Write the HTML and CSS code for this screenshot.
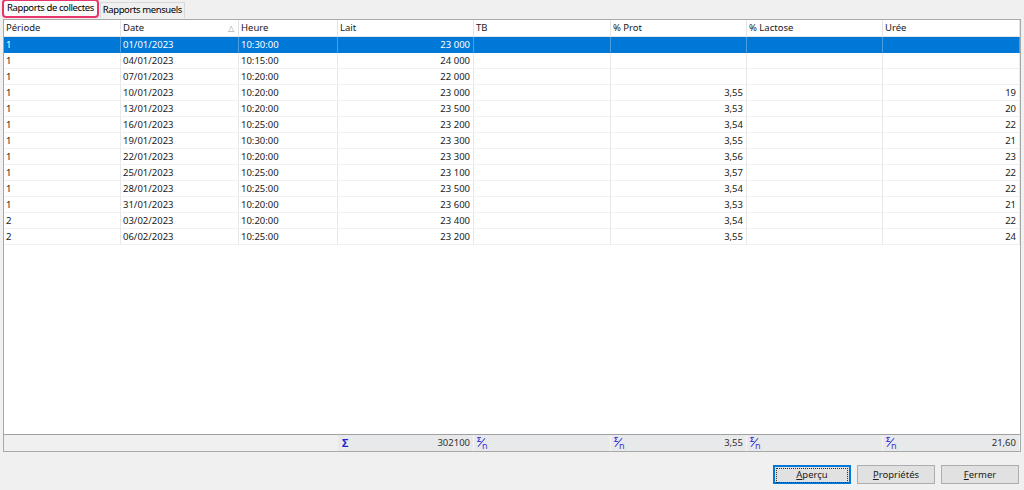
FILE: index.html
```
<!DOCTYPE html>
<html>
    <head>
        <title>Rapports de collectes</title>
        <meta charset="UTF-8">
        <link rel="stylesheet" href="styles.css">
    </head>
    <body>
        <div class="tabs">
            <div class="tab active">Rapports de collectes</div>
            <div class="tab">Rapports mensuels</div>
        </div>

        <div class="panel">
            <div class="row head">
                <div>Période</div>
                <div class="sorted">Date<span class="arrow">&#9651;</span></div>
                <div>Heure</div>
                <div>Lait</div>
                <div>TB</div>
                <div>% Prot</div>
                <div>% Lactose</div>
                <div>Urée</div>
            </div>
            <div class="rows">
                <div class="row sel"><div>1</div><div>01/01/2023</div><div>10:30:00</div><div class="num">23 000</div><div></div><div></div><div></div><div></div></div>
                <div class="row"><div>1</div><div>04/01/2023</div><div>10:15:00</div><div class="num">24 000</div><div></div><div></div><div></div><div></div></div>
                <div class="row"><div>1</div><div>07/01/2023</div><div>10:20:00</div><div class="num">22 000</div><div></div><div></div><div></div><div></div></div>
                <div class="row"><div>1</div><div>10/01/2023</div><div>10:20:00</div><div class="num">23 000</div><div></div><div class="num">3,55</div><div></div><div class="num">19</div></div>
                <div class="row"><div>1</div><div>13/01/2023</div><div>10:20:00</div><div class="num">23 500</div><div></div><div class="num">3,53</div><div></div><div class="num">20</div></div>
                <div class="row"><div>1</div><div>16/01/2023</div><div>10:25:00</div><div class="num">23 200</div><div></div><div class="num">3,54</div><div></div><div class="num">22</div></div>
                <div class="row"><div>1</div><div>19/01/2023</div><div>10:30:00</div><div class="num">23 300</div><div></div><div class="num">3,55</div><div></div><div class="num">21</div></div>
                <div class="row"><div>1</div><div>22/01/2023</div><div>10:20:00</div><div class="num">23 300</div><div></div><div class="num">3,56</div><div></div><div class="num">23</div></div>
                <div class="row"><div>1</div><div>25/01/2023</div><div>10:25:00</div><div class="num">23 100</div><div></div><div class="num">3,57</div><div></div><div class="num">22</div></div>
                <div class="row"><div>1</div><div>28/01/2023</div><div>10:25:00</div><div class="num">23 500</div><div></div><div class="num">3,54</div><div></div><div class="num">22</div></div>
                <div class="row"><div>1</div><div>31/01/2023</div><div>10:20:00</div><div class="num">23 600</div><div></div><div class="num">3,53</div><div></div><div class="num">21</div></div>
                <div class="row"><div>2</div><div>03/02/2023</div><div>10:20:00</div><div class="num">23 400</div><div></div><div class="num">3,54</div><div></div><div class="num">22</div></div>
                <div class="row"><div>2</div><div>06/02/2023</div><div>10:25:00</div><div class="num">23 200</div><div></div><div class="num">3,55</div><div></div><div class="num">24</div></div>
            </div>
            <div class="row foot">
                <div class="blank"></div>
                <div class="blank"></div>
                <div class="blank"></div>
                <div class="agg"><span class="sigma">&Sigma;</span><span>302100</span></div>
                <div class="agg"><span class="avg"><i>&Sigma;</i><b>n</b></span><span></span></div>
                <div class="agg"><span class="avg"><i>&Sigma;</i><b>n</b></span><span>3,55</span></div>
                <div class="agg"><span class="avg"><i>&Sigma;</i><b>n</b></span><span></span></div>
                <div class="agg"><span class="avg"><i>&Sigma;</i><b>n</b></span><span>21,60</span></div>
            </div>
        </div>

        <div class="buttons">
            <button class="btn default"><span class="focus"><u>A</u>perçu</span></button>
            <button class="btn"><u>P</u>ropriétés</button>
            <button class="btn"><u>F</u>ermer</button>
        </div>
    </body>
</html>
```

FILE: styles.css
```
body{
    margin: 0;
    background: #f0f0f0;
    font-family: "Noto Sans", "Open Sans", sans-serif;
    font-size: 9.5px;
    color: #1a1a1a;
}
.tabs{
    display: flex;
    height: 19px;
    padding-left: 2px;
    align-items: flex-end;
}
.tab{
    height: 15px;
    line-height: 14px;
    padding: 0 2px;
    border: 1px solid #d9d9d9;
    border-bottom: none;
    background: #f0f0f0;
    margin-bottom: 1px;
    letter-spacing: -0.4px;
    color: #000;
}
.tab.active{
    height: 15px;
    padding: 0 3px;
    background: #fbfbfb;
    border: 2px solid #e8346b;
    border-radius: 4px;
    margin-bottom: 0;
    margin-right: 1px;
    position: relative;
    top: -1px;
}
.panel{
    margin: 0 3px;
    height: 431px;
    border: 1px solid #a8a8a8;
    background: #fff;
    display: flex;
    flex-direction: column;
}
.row{
    display: grid;
    grid-template-columns: 117px 118px 99px 136px 137px 136px 136px 137px;
    height: 16px;
    line-height: 15px;
}
.row > div{
    border-right: 1px solid #e8e8e8;
    border-bottom: 1px solid #f0f0f0;
    padding: 0 3px 0 2px;
    white-space: nowrap;
    overflow: hidden;
}
.row .num{
    text-align: right;
}
.head{
    height: 17px;
    line-height: 16px;
    color: #202020;
}
.head > div{
    border-right: 1px solid #e5e5e5;
    border-bottom: 1px solid #e5e5e5;
}
.sorted{
    position: relative;
}
.arrow{
    position: absolute;
    right: 4px;
    top: 0;
    font-size: 8px;
    color: #9a9a9a;
}
.rows{
    flex: 1;
}
.sel{
    background: #0078d7;
    color: #fff;
}
.sel > div{
    border-right-color: #4fa0e3;
    border-bottom-color: #0078d7;
}
.foot{
    border-top: 1px solid #a0a0a0;
    background: #f0f0f0;
    height: 16px;
}
.foot > div{
    border-bottom: none;
}
.foot .blank{
    border-right: none;
}
.foot .agg{
    display: flex;
    justify-content: space-between;
    background: #e8e9ea;
    border-right: 1px solid #f6f6f6;
    color: #303030;
}
.sigma{
    color: #2323d0;
    font-weight: bold;
    font-size: 11px;
    padding-left: 2px;
}
.avg{
    color: #3a3ad6;
    position: relative;
    width: 12px;
    font-size: 7px;
    font-style: normal;
}
.avg i{
    position: absolute;
    left: 1px;
    top: -3px;
    font-style: normal;
    font-weight: bold;
}
.avg b{
    position: absolute;
    left: 6px;
    top: 3px;
    font-size: 9px;
    font-weight: normal;
}
.avg::after{
    content: "";
    position: absolute;
    left: 5px;
    top: 2px;
    width: 1px;
    height: 11px;
    background: #3a3ad6;
    transform: rotate(40deg);
}
.buttons{
    display: flex;
    justify-content: flex-end;
    gap: 6px;
    padding: 13px 5px 0 0;
}
.btn{
    width: 78px;
    height: 19px;
    background: #e1e1e1;
    border: 1px solid #adadad;
    font-family: "Noto Sans", "Open Sans", sans-serif;
    font-size: 9.5px;
    color: #1a1a1a;
    padding: 0;
}
.btn.default{
    border: 2px solid #0078d7;
    padding: 1px;
}
.focus{
    display: block;
    height: 13px;
    line-height: 12px;
    border: 1px dotted #333;
}
```
